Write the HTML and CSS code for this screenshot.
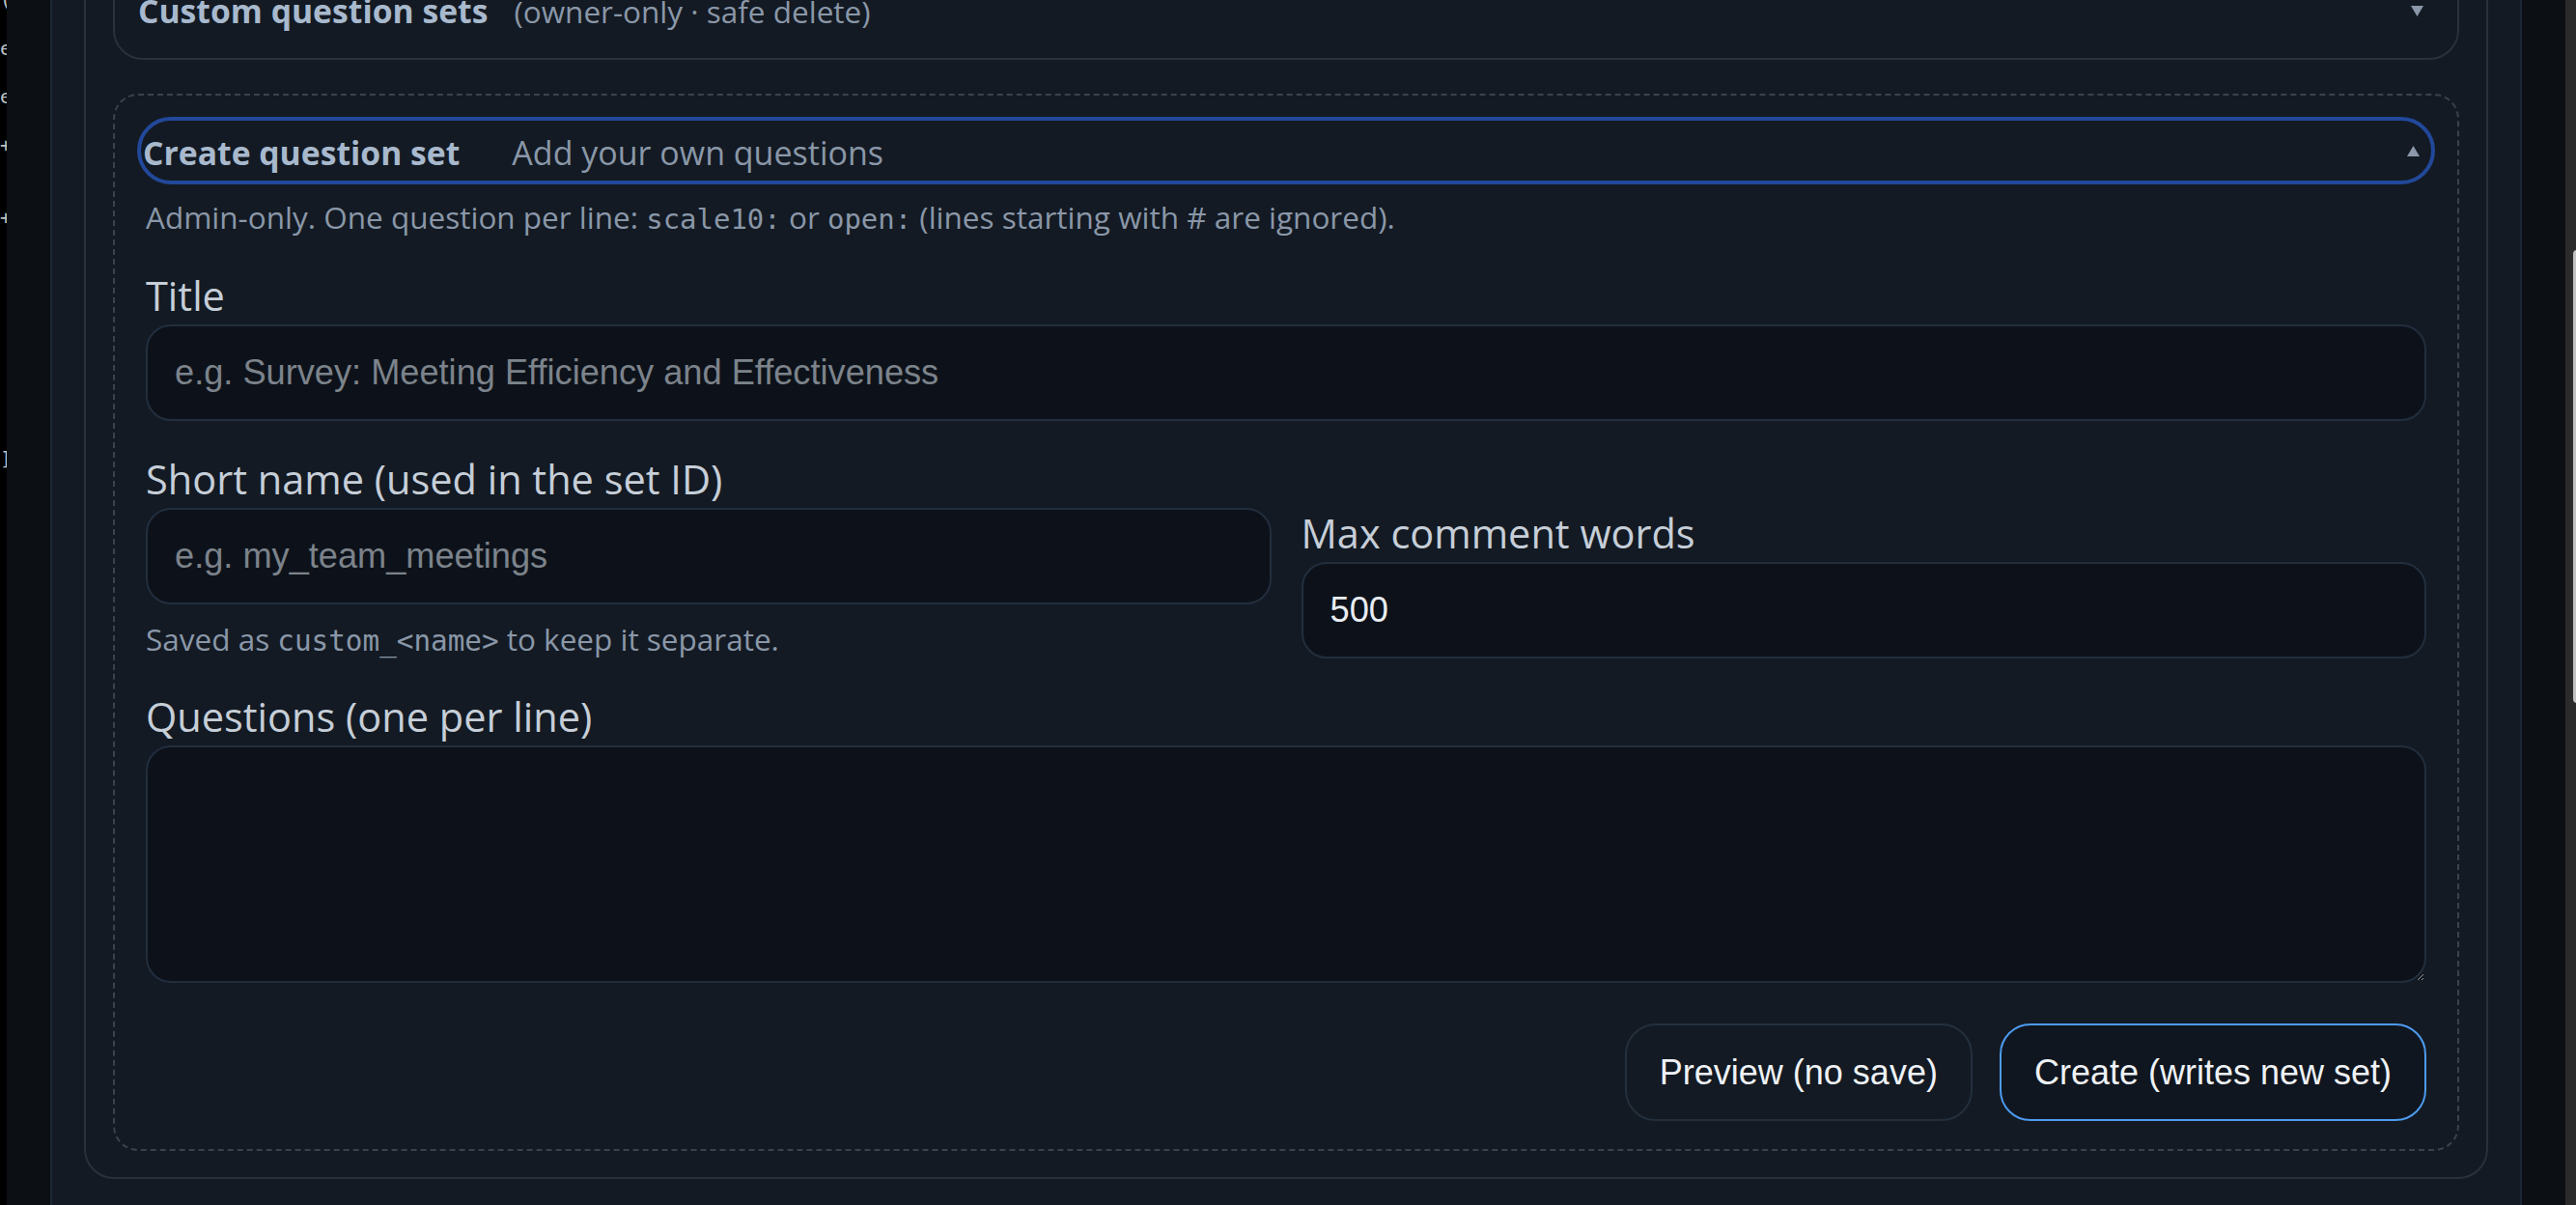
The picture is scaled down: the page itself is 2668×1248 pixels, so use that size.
FILE: index.html
```html
<!DOCTYPE html>
<html lang="en">
<head>
<meta charset="utf-8">
<title>Create question set</title>
<link rel="stylesheet" href="styles.css">
</head>
<body>
<div class="gutter"><pre class="gutter-code">(

e

e

+


+









]</pre></div>
<div class="main">
  <div class="container">
    <div class="card">
      <details class="box">
        <summary class="sum sum-plain">
          <span class="sum-text"><span class="sum-title">Custom question sets</span><span class="sum-hint sum-hint-sm">(owner-only · safe delete)</span></span>
          <svg class="caret" viewBox="0 0 13 11" width="13" height="11"><polygon points="0,0 13,0 6.5,11"/></svg>
        </summary>
      </details>
      <details class="dash" open>
        <summary class="sum sum-focus">
          <span class="sum-text sum-text-focus"><span class="sum-title">Create question set</span><span class="sum-hint sum-hint-lg">Add your own questions</span></span>
          <svg class="caret" viewBox="0 0 13 11" width="13" height="11"><polygon points="6.5,0 13,11 0,11"/></svg>
        </summary>
        <div class="body">
          <p class="note">Admin-only. One question per line: <code>scale10:</code> or <code>open:</code> (lines starting with # are ignored).</p>
          <label class="field f-title">
            <span class="lbl">Title</span>
            <input class="inp" type="text" placeholder="e.g. Survey: Meeting Efficiency and Effectiveness">
          </label>
          <div class="row">
            <label class="field">
              <span class="lbl">Short name (used in the set ID)</span>
              <input class="inp" type="text" placeholder="e.g. my_team_meetings">
              <span class="hint">Saved as <code class="code-lg">custom_&lt;name&gt;</code> to keep it separate.</span>
            </label>
            <label class="field">
              <span class="lbl">Max comment words</span>
              <input class="inp" type="text" value="500">
            </label>
          </div>
          <label class="field f-q">
            <span class="lbl">Questions (one per line)</span>
            <textarea class="ta"></textarea>
          </label>
          <div class="actions">
            <button class="btn" type="button">Preview (no save)</button>
            <button class="btn btn-primary" type="button">Create (writes new set)</button>
          </div>
        </div>
      </details>
    </div>
  </div>
</div>
<div class="scrollbar"><div class="thumb"></div></div>
</body>
</html>
```
FILE: styles.css
```css
* { box-sizing: border-box; }

html, body {
  margin: 0;
  height: 1248px;
  overflow: hidden;
}

body {
  display: flex;
  background: #0b0e12;
  font-family: "Open Sans", "Noto Sans", sans-serif;
}

.gutter {
  flex: none;
  width: 7px;
  height: 1248px;
  background: #000;
  overflow: hidden;
}

.gutter-code {
  margin: -12px 0 0 0;
  font-family: "DejaVu Sans Mono", monospace;
  font-size: 20px;
  line-height: 25px;
  color: #bfc3c7;
}

.main {
  flex: 1;
  min-width: 0;
  height: 1248px;
  padding: 0 45px;
  background: #0c0f13;
}

.container {
  height: 100%;
  background: #131a23;
  border-left: 2px solid #1b2636;
  border-right: 2px solid #1b2636;
  padding: 0 33px;
  overflow: hidden;
}

.card {
  margin-top: -70px;
  border: 2px solid #29313c;
  border-radius: 31px;
  padding: 28px 28px 27px;
  background: #131a23;
}

details > summary { list-style: none; }
details > summary::-webkit-details-marker { display: none; }

.box {
  border: 2px solid #29313c;
  border-radius: 31px;
  padding: 18px 24px;
}

.sum {
  display: flex;
  align-items: center;
  height: 62px;
  cursor: pointer;
}

.sum-plain { padding: 0 11px 0 0; }

.sum-text {
  display: flex;
  align-items: baseline;
  white-space: nowrap;
}

.sum-text-focus { margin-top: 4px; }

.sum-title {
  font-weight: 700;
  font-size: 33.7px;
  line-height: 1.2;
  color: #a8b9cd;
}

.sum-hint {
  color: #8a97a8;
  line-height: 1.2;
}

.sum-hint-sm { font-size: 31.5px; margin-left: 27px; }
.sum-hint-lg { font-size: 34px; margin-left: 54px; }

.caret {
  margin-left: auto;
  flex: none;
  fill: #8b98a9;
}

.dash {
  margin-top: 35px;
  border: 2px dashed #3a424d;
  border-radius: 26px;
  padding: 26px 32px 29px;
}

.sum-focus {
  margin: 0 -5px;
  padding: 0 12px 0 2px;
  outline: 4px solid #22489a;
  border-radius: 999px;
}

.body {
  display: flex;
  flex-direction: column;
}

.note {
  margin: 16px 0 0;
  font-size: 31.5px;
  line-height: 44px;
  color: #8a97a8;
}

code {
  font-family: "DejaVu Sans Mono", "Liberation Mono", monospace;
  font-size: 0.92em;
}

.code-lg { font-size: 0.93em; }

.field {
  display: flex;
  flex-direction: column;
}

.f-title { margin-top: 31px; }
.f-q { margin-top: 34px; }

.lbl {
  font-size: 41.5px;
  line-height: 52px;
  margin-bottom: 4px;
  color: #c6ced8;
}

.inp {
  width: 100%;
  height: 100px;
  border: 2px solid #222e3e;
  border-radius: 26px;
  background: #0d121a;
  padding: 0 28px;
  font-family: "Liberation Sans", Arial, sans-serif;
  font-size: 36.2px;
  color: #e8edf2;
  outline: none;
}

.inp::placeholder { color: #7c838b; }

.row {
  margin-top: 34px;
  display: grid;
  grid-template-columns: 1fr 1fr;
  column-gap: 31px;
  align-items: end;
}

.hint {
  margin-top: 18px;
  font-size: 31.5px;
  line-height: 36px;
  color: #8a97a8;
}

.ta {
  width: 100%;
  height: 246px;
  resize: vertical;
  border: 2px solid #222e3e;
  border-radius: 26px;
  background: #0d121a;
  padding: 20px 28px;
  font-family: "Liberation Sans", Arial, sans-serif;
  font-size: 36px;
  color: #e8edf2;
  outline: none;
}

.actions {
  margin-top: 42px;
  display: flex;
  justify-content: flex-end;
  gap: 28px;
}

.btn {
  height: 101px;
  padding: 0 34px;
  border: 2px solid #242f3d;
  border-radius: 32px;
  background: #131a23;
  color: #eef2f6;
  font-family: "Liberation Sans", Arial, sans-serif;
  font-size: 36px;
  cursor: pointer;
}

.btn-primary {
  border-color: #4d9bef;
  background: #10161f;
}

.scrollbar {
  flex: none;
  width: 11px;
  height: 1248px;
  background: #2b2b2b;
  overflow: hidden;
}

.thumb {
  margin: 259px 0 0 8px;
  width: 8px;
  height: 469px;
  border-radius: 4px;
  background: #c1c1c1;
}
```
